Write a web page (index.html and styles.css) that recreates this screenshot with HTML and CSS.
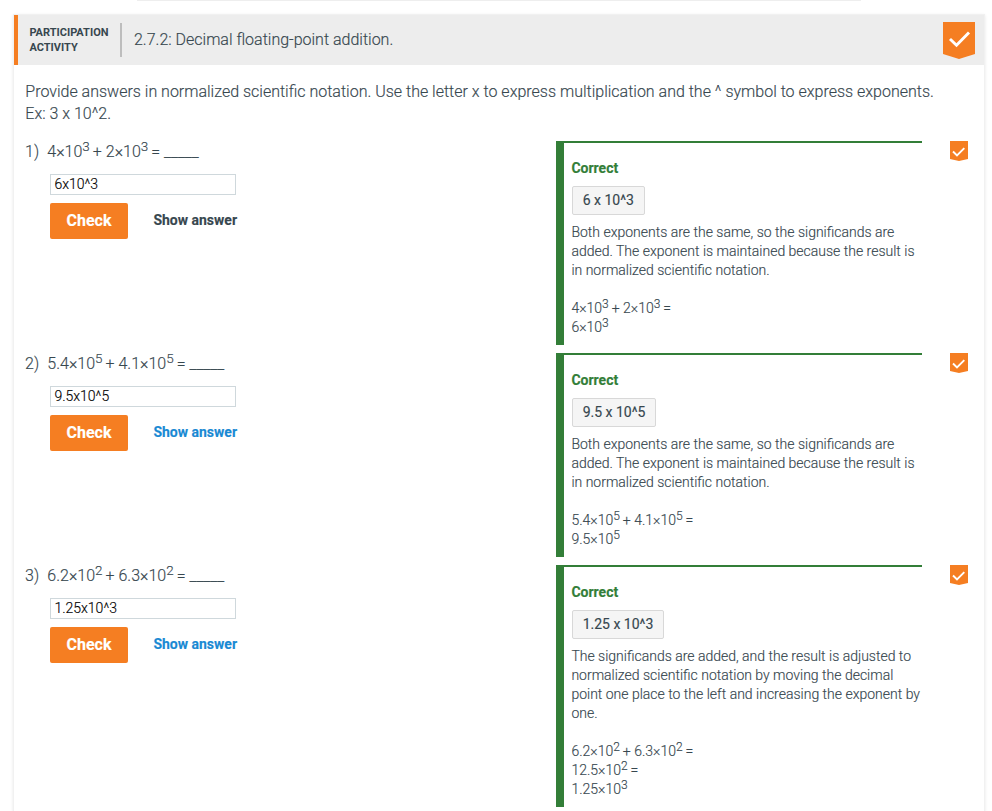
FILE: index.html
```html
<!DOCTYPE html>
<html lang="en">
<head>
<meta charset="utf-8">
<title>2.7.2: Decimal floating-point addition</title>
<link rel="stylesheet" href="styles.css">
</head>
<body>
<div class="previous"></div>
<main class="activity">
  <header class="header">
    <div class="kind">PARTICIPATION<br>ACTIVITY</div>
    <h1 class="title">2.7.2: Decimal floating-point addition.</h1>
    <svg class="badge" viewBox="0 0 32 37"><path fill="#f57e22" d="M0 0h32v32l-16 5L0 32z"/><path fill="none" stroke="#fff" stroke-width="2.9" d="M7 17l6.5 6.2L26 10.5"/></svg>
  </header>
  <p class="instructions">Provide answers in normalized scientific notation. Use the letter x to express multiplication and the ^ symbol to express exponents. Ex: 3 x 10^2.</p>

  <section class="question">
    <div class="prompt">
      <div class="setup"><span class="number">1)</span><span class="math">4<i>×</i>10<sup>3</sup> + 2<i>×</i>10<sup>3</sup> = _____</span></div>
      <input class="answer" type="text" value="6x10^3" spellcheck="false">
      <div class="actions"><button class="check">Check</button><button class="show seen">Show answer</button></div>
    </div>
    <div class="explanation">
      <div class="verdict">Correct</div>
      <div class="accepted">6 x 10^3</div>
      <p>Both exponents are the same, so the significands are added. The exponent is maintained because the result is in normalized scientific notation.</p>
      <p class="work"><span class="math">4<i>×</i>10<sup>3</sup> + 2<i>×</i>10<sup>3</sup> =</span><br><span class="math">6<i>×</i>10<sup>3</sup></span></p>
    </div>
    <svg class="mark" viewBox="0 0 18 20"><path fill="#f57e22" d="M0 0h18v18l-9 2-9-2z"/><path fill="none" stroke="#fff" stroke-width="1.9" d="M3 10.5l4 4 7.3-7.3"/></svg>
  </section>

  <section class="question">
    <div class="prompt">
      <div class="setup"><span class="number">2)</span><span class="math">5.4<i>×</i>10<sup>5</sup> + 4.1<i>×</i>10<sup>5</sup> = _____</span></div>
      <input class="answer" type="text" value="9.5x10^5" spellcheck="false">
      <div class="actions"><button class="check">Check</button><button class="show">Show answer</button></div>
    </div>
    <div class="explanation">
      <div class="verdict">Correct</div>
      <div class="accepted">9.5 x 10^5</div>
      <p>Both exponents are the same, so the significands are added. The exponent is maintained because the result is in normalized scientific notation.</p>
      <p class="work"><span class="math">5.4<i>×</i>10<sup>5</sup> + 4.1<i>×</i>10<sup>5</sup> =</span><br><span class="math">9.5<i>×</i>10<sup>5</sup></span></p>
    </div>
    <svg class="mark" viewBox="0 0 18 20"><path fill="#f57e22" d="M0 0h18v18l-9 2-9-2z"/><path fill="none" stroke="#fff" stroke-width="1.9" d="M3 10.5l4 4 7.3-7.3"/></svg>
  </section>

  <section class="question">
    <div class="prompt">
      <div class="setup"><span class="number">3)</span><span class="math">6.2<i>×</i>10<sup>2</sup> + 6.3<i>×</i>10<sup>2</sup> = _____</span></div>
      <input class="answer" type="text" value="1.25x10^3" spellcheck="false">
      <div class="actions"><button class="check">Check</button><button class="show">Show answer</button></div>
    </div>
    <div class="explanation">
      <div class="verdict">Correct</div>
      <div class="accepted">1.25 x 10^3</div>
      <p>The significands are added, and the result is adjusted to normalized scientific notation by moving the decimal point one place to the left and increasing the exponent by one.</p>
      <p class="work"><span class="math">6.2<i>×</i>10<sup>2</sup> + 6.3<i>×</i>10<sup>2</sup> =</span><br><span class="math">12.5<i>×</i>10<sup>2</sup> =</span><br><span class="math">1.25<i>×</i>10<sup>3</sup></span></p>
    </div>
    <svg class="mark" viewBox="0 0 18 20"><path fill="#f57e22" d="M0 0h18v18l-9 2-9-2z"/><path fill="none" stroke="#fff" stroke-width="1.9" d="M3 10.5l4 4 7.3-7.3"/></svg>
  </section>
</main>
</body>
</html>
```
FILE: styles.css
```css
* { box-sizing: border-box; }
html { overflow: hidden; }
body {
  margin: 0;
  height: 811px;
  overflow: hidden;
  background: #fff;
  color: #37474f;
  font: 300 16px/22px Roboto, sans-serif;
  -webkit-text-stroke: 0.15px;
}
button, input { font-family: inherit; margin: 0; }

.previous { height: 1px; width: 724px; margin: 0 0 14px 137px; background: #eee; }

.activity {
  width: 970px;
  height: 796px;
  margin-left: 14px;
  box-shadow: 0 0 0 1px #f1f1f1, 0 1px 3px 1px #e8e8e8;
}
.header {
  display: flex;
  height: 50px;
  padding: 7px 9px 0 11.4px;
  border-left: 4px solid #f57e22;
  background: #ededed;
}
.kind {
  width: 92.6px;
  height: 34px;
  margin-top: 1px;
  padding-top: 2px;
  border-right: 2px solid #bdbdbd;
  font-size: 11px;
  line-height: 15px;
  font-weight: 700;
  -webkit-text-stroke: 0;
}
.title { margin: 7px 0 0 12px; font-size: 16px; line-height: 22px; font-weight: 300; }
.badge { width: 32px; height: 37px; margin-left: auto; }

.instructions { margin: 16px 40px 16px 11.3px; }

.question {
  display: grid;
  grid-template-columns: 531px 366px 46px;
  margin: 0 0 8px 11px;
  align-items: start;
}
.mark { width: 18px; height: 20px; margin-left: 28px; }
.setup { display: flex; height: 22px; }
.number { width: 22.3px; }
.math { white-space: nowrap; }
.math i { font-style: normal; }
.math sup { font-size: 12px; line-height: 0; vertical-align: 5px; letter-spacing: -0.4px; }
.setup .math sup { font-size: 13.4px; vertical-align: 6px; letter-spacing: -0.8px; }
.answer {
  display: block;
  width: 186px;
  height: 21px;
  margin: 11px 0 8px 25px;
  padding: 0 3px 2px 3.4px;
  border: 1px solid #cfd8dc;
  color: #000;
  font-size: 14px;
  font-weight: 300;
}
.actions { display: flex; margin-left: 25px; }
.check {
  width: 78px;
  height: 36px;
  padding: 0 0 2px;
  border: 0;
  border-radius: 2px;
  background: #f57e22;
  color: #fff;
  font-size: 16px;
  font-weight: 700;
}
.show {
  height: 36px;
  margin-left: 25.4px;
  padding: 0 0 2px;
  border: 0;
  background: none;
  color: #1989d3;
  font-size: 14px;
  font-weight: 700;
}
.show.seen { color: #37474f; }

.explanation {
  padding: 16px 0 8px 7.4px;
  border-left: 8px solid #337e38;
  border-top: 2px solid #337e38;
  font-size: 14px;
  line-height: 19px;
}
.explanation p { margin: 0; }
.explanation .work { margin-top: 19px; }
.verdict { color: #337e38; font-weight: 700; }
.accepted {
  width: max-content;
  height: 29px;
  margin: 8px 0 8px 0.6px;
  padding: 0 9.7px;
  border: 1px solid #d8d8d8;
  border-radius: 2px;
  background: #f5f5f5;
  line-height: 27px;
  font-weight: 400;
}
```
